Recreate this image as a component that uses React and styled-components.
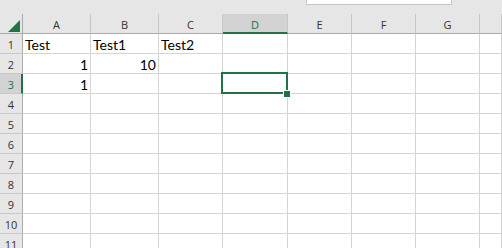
import React from "react";
import styled, { createGlobalStyle, css } from "styled-components";

const GREEN = "#217346";

const GlobalStyle = createGlobalStyle`
  html, body { margin: 0; padding: 0; background: #fff; overflow: hidden; }
  * { box-sizing: border-box; }
`;

const Sheet = styled.div`
  width: 502px;
  height: 248px;
  overflow: hidden;
  background: #e6e6e6;
`;

const TopBar = styled.div`
  height: 14px;
  display: flex;
  align-items: flex-start;
`;

const FormulaStub = styled.div`
  margin-left: 306px;
  width: 146px;
  height: 5px;
  background: #fff;
  border: 1px solid #c6c6c6;
  border-top: none;
`;

const Grid = styled.div`
  display: grid;
  grid-template-columns: 23px 68px 68px 64px 65px 64px 64px 64px 1fr;
  grid-auto-rows: 20px;
  background: #fff;
`;

const Corner = styled.div`
  background: #e6e6e6;
  border-right: 1px solid #ababab;
  border-bottom: 1px solid #ababab;
  display: flex;
  align-items: flex-end;
  justify-content: flex-end;
  padding: 0 2px 1px 0;
`;

const ColHeader = styled.div`
  background: #e6e6e6;
  border-right: 1px solid #c6c6c6;
  border-bottom: 1px solid #ababab;
  font-family: "Open Sans", "Liberation Sans", sans-serif;
  font-size: 11px;
  line-height: 21px;
  color: #333;
  text-align: center;
  ${(p) =>
    p.$selected &&
    css`
      background: #d2d2d2;
      border-bottom: 2px solid ${GREEN};
      color: ${GREEN};
    `}
`;

const RowHeader = styled.div`
  background: #e6e6e6;
  border-right: 1px solid #ababab;
  border-bottom: 1px solid #c8c8c8;
  font-family: "Open Sans", "Liberation Sans", sans-serif;
  font-size: 11px;
  line-height: 21px;
  color: #333;
  text-align: center;
  ${(p) =>
    p.$selected &&
    css`
      background: #d2d2d2;
      border-right: 2px solid ${GREEN};
      color: ${GREEN};
      padding-left: 1px;
    `}
`;

const Cell = styled.div`
  position: relative;
  border-right: 1px solid #d4d4d4;
  border-bottom: 1px solid #d4d4d4;
  font-family: Lato, "Liberation Sans", sans-serif;
  font-size: 14px;
  line-height: 21px;
  color: #000;
  padding: 0 2px;
  white-space: nowrap;
  text-align: ${(p) => (p.$align === "right" ? "right" : "left")};
`;

const SelectionBox = styled.div`
  position: absolute;
  top: -2px;
  left: -2px;
  right: -1px;
  bottom: -1px;
  border: 2px solid ${GREEN};
  z-index: 2;
  pointer-events: none;
`;

const FillHandle = styled.div`
  position: absolute;
  right: -4px;
  bottom: -5px;
  width: 6px;
  height: 6px;
  background: ${GREEN};
  box-shadow: 0 0 0 1px #fff;
`;

const columns = ["A", "B", "C", "D", "E", "F", "G", ""];
const SELECTED_COL = 3;
const SELECTED_ROW = 3;

const data = {
  1: { 0: { v: "Test" }, 1: { v: "Test1" }, 2: { v: "Test2" } },
  2: { 0: { v: "1", align: "right" }, 1: { v: "10", align: "right" } },
  3: { 0: { v: "1", align: "right" } },
};

export default function App() {
  const rows = Array.from({ length: 11 }, (_, i) => i + 1);
  return (
    <Sheet>
      <GlobalStyle />
      <TopBar>
        <FormulaStub />
      </TopBar>
      <Grid>
        <Corner>
          <svg width="12" height="12" viewBox="0 0 12 12">
            <polygon points="12,0 12,12 0,12" fill={GREEN} />
          </svg>
        </Corner>
        {columns.map((c, i) => (
          <ColHeader key={"h" + i} $selected={i === SELECTED_COL}>
            {c}
          </ColHeader>
        ))}
        {rows.map((r) => (
          <React.Fragment key={r}>
            <RowHeader $selected={r === SELECTED_ROW}>{r}</RowHeader>
            {columns.map((_, ci) => {
              const d = data[r] && data[r][ci];
              const isSel = r === SELECTED_ROW && ci === SELECTED_COL;
              return (
                <Cell key={ci} $align={d ? d.align : undefined}>
                  {d ? d.v : null}
                  {isSel && (
                    <SelectionBox>
                      <FillHandle />
                    </SelectionBox>
                  )}
                </Cell>
              );
            })}
          </React.Fragment>
        ))}
      </Grid>
    </Sheet>
  );
}
